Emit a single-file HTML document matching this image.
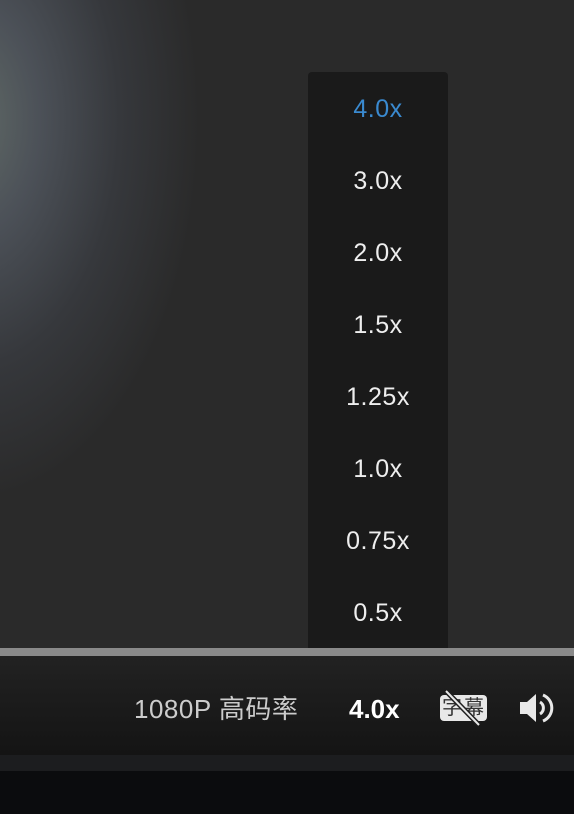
<!DOCTYPE html>
<html><head><meta charset="utf-8"><style>
body{margin:0;width:574px;height:814px;overflow:hidden;background:#2a2a2a;font-family:"Liberation Sans","Noto Sans CJK SC",sans-serif;position:relative}
.bg{position:absolute;left:0;top:0;width:574px;height:648px;background:radial-gradient(ellipse 230px 380px at -30px 120px,#606a66 0%,#4c5158 30%,#36383c 65%,#2a2a2a 100%)}
.menu{position:absolute;left:308px;top:72px;width:140px;height:576px;background:#1a1a1a;border-radius:4px 4px 0 0}
.menu div{height:72px;line-height:74px;text-align:center;color:#eee;font-size:25px;letter-spacing:0.5px}
.bar{position:absolute;left:0;top:648px;width:574px;height:8px;background:#8a8a8a}
.ctl{position:absolute;left:0;top:656px;width:574px;height:99px;background:linear-gradient(#222,#141414)}
.s1{position:absolute;left:0;top:755px;width:574px;height:16px;background:#1c1d1f}
.s2{position:absolute;left:0;top:771px;width:574px;height:43px;background:#0b0c0e}
.t{position:absolute;top:692px;font-size:26px;line-height:34px}
</style></head><body>
<div class="bg"></div>
<div class="menu">
<div style="color:#3a8ad0">4.0x</div><div>3.0x</div><div>2.0x</div><div>1.5x</div><div>1.25x</div><div>1.0x</div><div>0.75x</div><div>0.5x</div>
</div>
<div class="bar"></div>
<div class="ctl"></div>
<div class="s1"></div><div class="s2"></div>
<div class="t" style="left:134px;color:#ccc;letter-spacing:0.5px">1080P 高码率</div>
<div class="t" style="left:349px;color:#fff;font-weight:bold">4.0x</div>
<div style="position:absolute;left:440px;top:695px;width:47px;height:26px;background:#e8e8e8;border-radius:4px"></div>
<div style="position:absolute;left:442px;top:694px;font-size:20px;line-height:28px;color:#333;letter-spacing:2px">字幕</div>
<svg style="position:absolute;left:440px;top:688px" width="50" height="40"><line x1="6" y1="3" x2="39" y2="37" stroke="#1e1e1e" stroke-width="5"/><line x1="6" y1="3" x2="39" y2="37" stroke="#e8e8e8" stroke-width="2"/></svg>
<svg style="position:absolute;left:518px;top:691px" width="36" height="34" viewBox="0 0 36 34"><path d="M2 11h7l9-8v28l-9-8H2z" fill="#e8e8e8"/><path d="M22 11a7 7 0 0 1 0 12" stroke="#e8e8e8" stroke-width="3" fill="none"/><path d="M25 4a14 14 0 0 1 0 26" stroke="#e8e8e8" stroke-width="3" fill="none"/></svg>
</body></html>
